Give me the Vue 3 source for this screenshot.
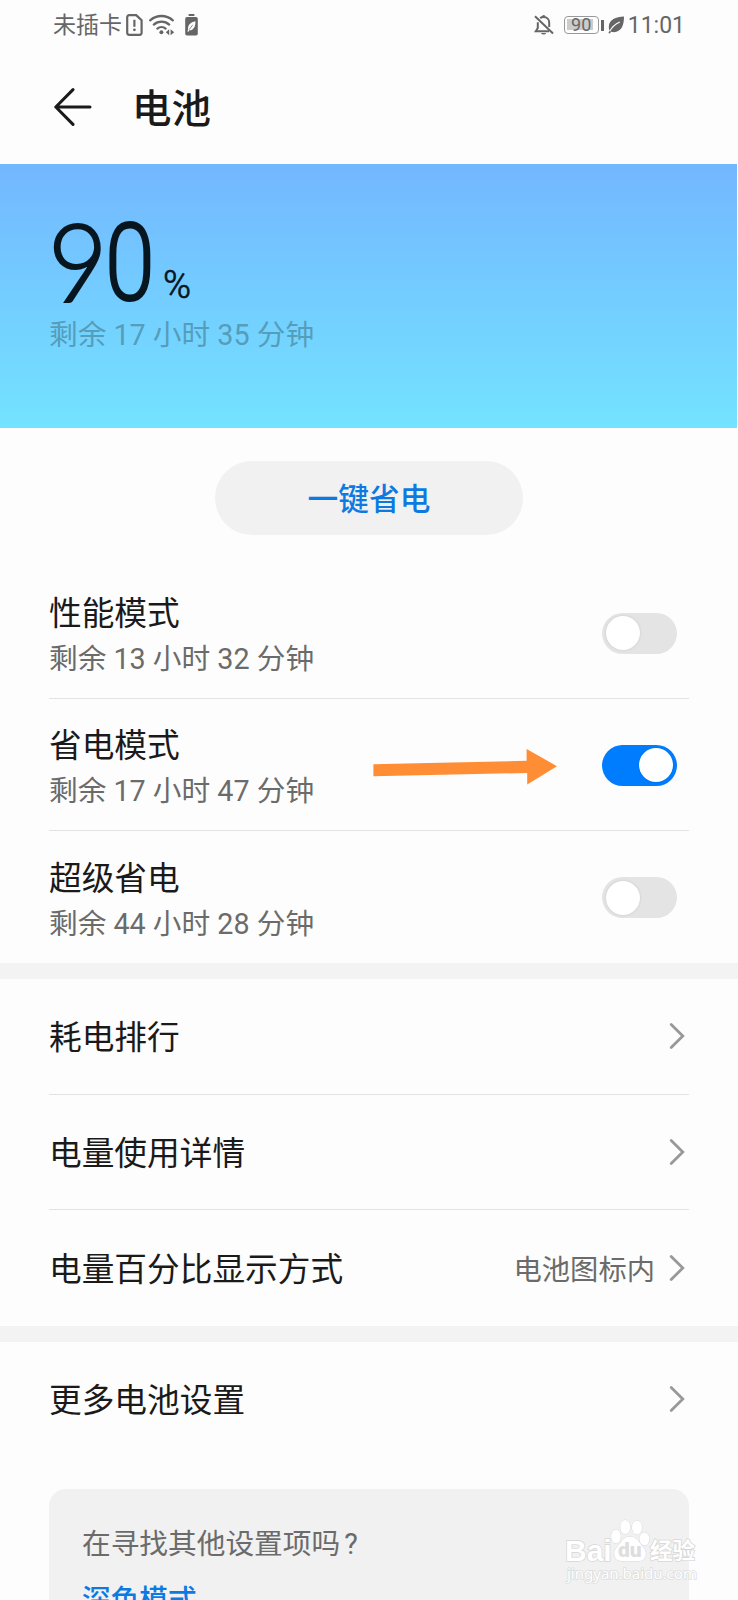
<script setup>
import { ref } from 'vue'

const modes = ref([
  { title: '性能模式', remain: '剩余 13 小时 32 分钟', on: false },
  { title: '省电模式', remain: '剩余 17 小时 47 分钟', on: true, marked: true },
  { title: '超级省电', remain: '剩余 44 小时 28 分钟', on: false }
])

const groups = [
  [
    { title: '耗电排行' },
    { title: '电量使用详情' },
    { title: '电量百分比显示方式', value: '电池图标内' }
  ],
  [{ title: '更多电池设置' }]
]
</script>

<template>
  <div class="page">
    <div class="status-bar">
      <div class="status-left">
        <span class="carrier">未插卡</span>
        <svg class="icon-sim" width="17" height="22" viewBox="0 0 17 22">
          <path d="M3.200 1.200h7L15.600 6.200v12.600a2 2 0 0 1-2 2H3.200a2 2 0 0 1-2-2V3.200a2 2 0 0 1 2-2z" fill="none" stroke="#666" stroke-width="2.200" />
          <path d="M8.400 5.800v7" stroke="#666" stroke-width="2.200" />
          <circle cx="8.400" cy="15.800" r="1.400" fill="#666" />
        </svg>
        <svg class="icon-wifi" width="26" height="22" viewBox="0 0 26 22">
          <g fill="none" stroke="#666" stroke-width="2.300" stroke-linecap="round">
            <path d="M1.200 6.300a17 17 0 0 1 22.600 0" />
            <path d="M4.800 10.600a11.600 11.600 0 0 1 15.400 0" />
            <path d="M8.400 14.600a6.200 6.200 0 0 1 8.200 0" />
          </g>
          <circle cx="12.400" cy="18.200" r="2" fill="#666" />
          <path d="M20.200 15.200v6l-3.400-3zM21.600 15.200v6l3.600-3z" fill="#666" />
        </svg>
        <svg class="icon-saver" width="13" height="22" viewBox="0 0 13 22">
          <path d="M3.600 0h5.800v2H3.600zM2 3h9a1.800 1.800 0 0 1 1.800 1.800v15A1.800 1.800 0 0 1 11 21.600H2A1.800 1.800 0 0 1 .2 19.800V4.800A1.800 1.800 0 0 1 2 3z" fill="#666" />
          <path d="M10.400 7.200C5.500 8.300 2.600 10.800 3 15.800l-.6 1.800 1 .2 1-1.500c4.300-.1 6.200-3.700 6-9.100z" fill="#fdfdfd" />
          <path d="M4 15.800l3.800-5" stroke="#666" stroke-width=".7" />
        </svg>
      </div>
      <div class="status-right">
        <svg class="icon-bell" width="20" height="22" viewBox="0 0 20 22">
          <g fill="none" stroke="#666" stroke-width="2">
            <path d="M3.800 8.200v5.800L1.800 17.200H15M6.200 4.200C7 3.400 8 3 9.600 3c3.400 0 5.600 2.400 5.600 5.600V13" />
            <path d="M1 2.200l18 17.300" />
          </g>
          <path d="M8 2.800a1.700 1.700 0 0 1 3.400 0zM7 19h5.200a2.700 2.200 0 0 1-5.200 0z" fill="#666" />
        </svg>
        <div class="battery"><span>90</span></div>
        <i class="battery-nub"></i>
        <svg class="icon-leaf" width="17" height="18" viewBox="0 0 17 18">
          <path d="M16 .6C8 1.200.8 3.400.8 11c0 1.400.3 2.500.8 3.400L.4 17l1.500.4 1.200-1.600C10.800 17.800 16.200 12.400 16 .6z" fill="#666" />
          <path d="M1.800 15.200C4 10.800 7.500 8 11.800 6" fill="none" stroke="#fdfdfd" stroke-width="1.100" />
        </svg>
        <span class="clock">11:01</span>
      </div>
    </div>

    <header class="header">
      <svg width="38" height="38" viewBox="0 0 38 38" fill="none" stroke="#1a1a1a" stroke-width="3" stroke-linecap="round" stroke-linejoin="round">
        <path d="M19 1.600L1.800 19 19 36.400M1.800 19H36" />
      </svg>
      <h1>电池</h1>
    </header>

    <section class="hero">
      <div class="level">
        <span class="level-num"><span class="nine">9</span><span class="zero">0</span></span>
        <span class="level-unit">%</span>
      </div>
      <p class="level-remain">剩余 17 小时 35 分钟</p>
    </section>

    <div class="action">
      <button class="save-btn">一键省电</button>
    </div>

    <section class="modes">
      <div v-for="mode in modes" :key="mode.title" class="mode">
        <div class="mode-text">
          <div class="title">{{ mode.title }}</div>
          <div class="remain">{{ mode.remain }}</div>
        </div>
        <svg v-if="mode.marked" class="pointer" width="185" height="36" viewBox="0 0 185 36">
          <path d="M.4 15.200L153.600 11.800V0L184 17.200 154.200 35.400V24L.4 27.200z" fill="#ff8d36" />
        </svg>
        <button class="toggle" :class="{ on: mode.on }" @click="mode.on = !mode.on"><i></i></button>
      </div>
    </section>

    <section v-for="(group, index) in groups" :key="index" class="group">
      <div v-for="item in group" :key="item.title" class="item">
        <span class="title">{{ item.title }}</span>
        <span v-if="item.value" class="value">{{ item.value }}</span>
        <svg class="chevron" width="16" height="28" viewBox="0 0 16 28">
          <path d="M2.200 2.400L13.800 14 2.200 25.600" fill="none" stroke="#999" stroke-width="2.800" stroke-linecap="round" />
        </svg>
      </div>
    </section>

    <section class="suggest">
      <div class="suggest-title">在寻找其他设置项吗<span class="mark">?</span></div>
      <a class="suggest-link">深色模式</a>
      <div class="watermark">
        <div class="brand">
          <span class="brand-bai">Bai</span>
          <span class="paw">
            <svg width="40" height="44" viewBox="0 0 40 44" fill="#fff" stroke="#d9d9d9" stroke-width="1">
              <ellipse cx="6" cy="17.500" rx="4.800" ry="6.700" />
              <ellipse cx="15.300" cy="8" rx="5" ry="7" />
              <ellipse cx="27" cy="8.500" rx="5" ry="7" />
              <ellipse cx="34.400" cy="20" rx="5" ry="6.500" />
              <path d="M20 17.500c6.500 0 9.500 6.500 13 10.500 5.500 6 2.500 14-4.500 14H11.500C4 42 2 33.500 7 28c3.800-4 6.500-10.500 13-10.500z" />
            </svg>
            <b>du</b>
          </span>
          <span class="brand-cn">经验</span>
        </div>
        <div class="brand-url">jingyan.baidu.com</div>
      </div>
    </section>
  </div>
</template>

<style>
body {
  background: #fdfdfd;
  overflow: hidden;
}
</style>

<style scoped>
.page {
  width: 738px;
  height: 1600px;
  overflow: hidden;
  background: #fdfdfd;
  color: #1a1a1a;
  font-family: Roboto, "Noto Sans CJK SC", sans-serif;
}

.status-bar {
  display: flex;
  justify-content: space-between;
  align-items: center;
  box-sizing: border-box;
  height: 50px;
  padding: 0 53px;
  color: #666;
}

.status-left,
.status-right {
  display: flex;
  align-items: center;
}

.carrier {
  font-size: 23px;
  line-height: 30px;
  padding-top: 2px;
}

.icon-sim { margin-left: 4px; }
.icon-wifi { margin-left: 6px; }
.icon-saver { margin-left: 10px; }

.battery {
  display: flex;
  justify-content: center;
  align-items: center;
  box-sizing: border-box;
  width: 35px;
  height: 18px;
  margin-left: 10px;
  border: 1.500px solid #999;
  border-radius: 4px;
  background: linear-gradient(#ccc, #ccc) 2px 2px / 26px 11px no-repeat;
  font-size: 18px;
  line-height: 18px;
}

.battery-nub {
  width: 3px;
  height: 11px;
  margin-left: 2px;
  background: #666;
}

.icon-leaf { margin-left: 4px; }

.clock {
  margin-left: 3px;
  padding-top: 1px;
  font-size: 23px;
  line-height: 30px;
}

.header {
  display: flex;
  align-items: center;
  height: 114px;
  padding-left: 54px;
}

.header h1 {
  margin: 5px 0 0 40px;
  font-size: 39.500px;
  line-height: 50px;
  font-weight: 500;
}

.hero {
  box-sizing: border-box;
  height: 264px;
  margin-right: 1px;
  padding: 50px 0 0 49px;
  background: linear-gradient(#73b7ff, #73e3ff);
}

.level {
  display: flex;
  align-items: flex-end;
  height: 96px;
  color: #07161f;
}

.level-num {
  display: flex;
  width: 114px;
  font-size: 108px;
  line-height: 94px;
  font-weight: 300;
  -webkit-text-stroke: 2px #07161f;
}

.nine,
.zero {
  width: 57px;
  transform-origin: left;
}

.nine {
  margin: -3px 0 3px -1px;
  font-family: Lato, sans-serif;
  transform: scaleX(0.95);
}

.zero {
  transform: scaleX(0.83);
}

.level-unit {
  font-size: 38px;
  line-height: 50px;
  font-weight: 300;
  -webkit-text-stroke: 0.700px #07161f;
}

.level-remain {
  margin: 5px 0 0;
  font-size: 28.700px;
  line-height: 40px;
  color: #559dba;
}

.action {
  display: flex;
  justify-content: center;
  padding: 33px 0 32px;
}

.save-btn {
  width: 308px;
  height: 74px;
  padding: 0 0 4px;
  border: none;
  border-radius: 37px;
  background: #f1f1f1;
  color: #0d7ae2;
  font-family: inherit;
  font-size: 30.700px;
  font-weight: 500;
}

.mode {
  display: flex;
  align-items: center;
  box-sizing: border-box;
  height: 132px;
  margin: 0 49px;
  padding: 1px 12px 0 0;
  border-bottom: 1px solid #e3e3e3;
}

.mode:last-child,
.item:last-child {
  border-bottom: none;
}

.mode-text {
  flex: 1;
  padding-top: 5px;
}

.title {
  font-size: 32.700px;
  line-height: 48px;
}

.remain {
  font-size: 28.700px;
  line-height: 43px;
  color: #6b6b6b;
}

.pointer {
  margin: 3px 44px 0 0;
}

.toggle {
  display: flex;
  align-items: center;
  width: 75px;
  height: 41px;
  padding: 0 4px;
  border: none;
  border-radius: 21px;
  background: #e4e4e4;
}

.toggle i {
  width: 34px;
  height: 34px;
  border-radius: 50%;
  background: #fff;
  box-shadow: 0 0 3px rgba(0, 0, 0, 0.12);
}

.toggle.on {
  justify-content: flex-end;
  background: #007dff;
}

.group {
  padding: 0 49px;
  border-top: 16px solid #f3f3f3;
}

.item {
  display: flex;
  align-items: center;
  box-sizing: border-box;
  height: 115.500px;
  padding-right: 4px;
  border-bottom: 1px solid #e3e3e3;
}

.item .title {
  flex: 1;
  padding-top: 4px;
}

.value {
  margin-right: 14px;
  font-size: 28.300px;
  color: #6b6b6b;
}

.suggest {
  position: relative;
  box-sizing: border-box;
  margin: 32px 49px 0;
  height: 192px;
  padding: 33px 0 0 33px;
  border-radius: 17px;
  background: #f1f1f1;
}

.suggest-title {
  font-size: 28.700px;
  line-height: 44px;
  color: #6b6b6b;
}

.mark {
  margin-left: 4px;
}

.suggest-link {
  display: block;
  margin-top: 12px;
  font-size: 28.700px;
  line-height: 44px;
  font-weight: 500;
  color: #0d7ae2;
}

.watermark {
  position: absolute;
  left: 516px;
  top: 30px;
  width: 140px;
  color: #fff;
}

.brand {
  display: flex;
  align-items: flex-end;
  height: 44px;
  font-weight: 700;
  -webkit-text-stroke: 1.500px #d6d6d6;
  paint-order: stroke;
}

.brand-bai {
  width: 45px;
  font-family: "Liberation Sans", sans-serif;
  font-size: 30px;
  line-height: 24px;
}

.paw {
  position: relative;
  width: 40px;
  height: 44px;
}

.paw b {
  position: absolute;
  left: 8px;
  top: 19px;
  font-size: 21px;
  line-height: 24px;
  color: #dedede;
  -webkit-text-stroke: 0;
}

.brand-cn {
  font-size: 22.500px;
  line-height: 24px;
}

.brand-url {
  margin: 1px 0 0 2px;
  font-family: "Noto Sans", sans-serif;
  font-size: 15px;
  line-height: 18px;
  -webkit-text-stroke: 1.500px #dcdcdc;
  paint-order: stroke;
}
</style>
